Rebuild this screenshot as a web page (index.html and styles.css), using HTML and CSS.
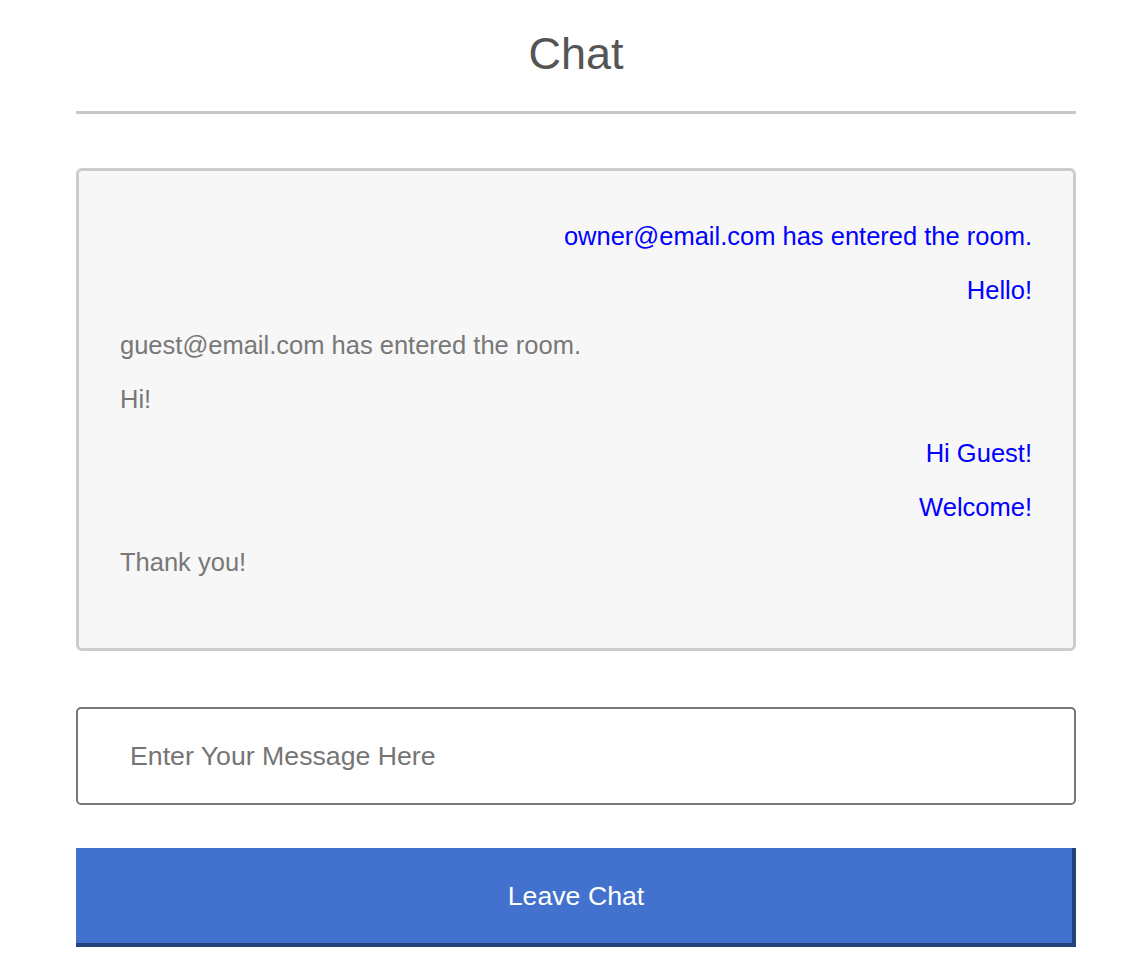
FILE: index.html
```html
<!DOCTYPE html>
<html lang="en">
<head>
<meta charset="utf-8">
<title>Chat</title>
<link rel="stylesheet" href="styles.css">
</head>
<body>
<main class="page">
  <h1 class="title">Chat</h1>
  <hr class="divider">
  <section class="messages">
    <div class="msg msg-own">owner@email.com has entered the room.</div>
    <div class="msg msg-own">Hello!</div>
    <div class="msg msg-other">guest@email.com has entered the room.</div>
    <div class="msg msg-other">Hi!</div>
    <div class="msg msg-own">Hi Guest!</div>
    <div class="msg msg-own">Welcome!</div>
    <div class="msg msg-other">Thank you!</div>
  </section>
  <input class="message-input" type="text" placeholder="Enter Your Message Here">
  <button class="leave-btn" type="button">Leave Chat</button>
</main>
</body>
</html>
```

FILE: styles.css
```css
html, body {
  margin: 0;
  padding: 0;
  background: #ffffff;
}

body {
  font-family: "Liberation Sans", Arial, Helvetica, sans-serif;
}

.page {
  width: 1000px;
  margin-left: 76px;
  display: flex;
  flex-direction: column;
}

.title {
  margin: 28px 0 0;
  font-size: 45px;
  line-height: 52px;
  font-weight: normal;
  color: #555555;
  text-align: center;
}

.divider {
  margin: 31px 0 0;
  border: none;
  height: 3px;
  background: #c8c8c8;
}

.messages {
  margin-top: 54px;
  box-sizing: content-box;
  border: 3px solid #cccccc;
  border-radius: 6px;
  background: #f7f7f7;
  padding: 38px 41px 0;
  height: 439px;
  display: flex;
  flex-direction: column;
}

.msg {
  font-size: 25.5px;
  line-height: 54.3px;
}

.msg-own {
  color: #0000ff;
  text-align: right;
}

.msg-other {
  color: #787878;
  text-align: left;
}

.message-input {
  margin-top: 56px;
  box-sizing: border-box;
  width: 100%;
  height: 98px;
  border: 2px solid #777777;
  border-radius: 5px;
  padding: 0 52px;
  font-family: "Liberation Sans", Arial, Helvetica, sans-serif;
  font-size: 26.7px;
  color: #333333;
  background: #ffffff;
  outline: none;
}

.message-input::placeholder {
  color: #757575;
}

.leave-btn {
  margin-top: 43px;
  box-sizing: border-box;
  width: 100%;
  height: 99px;
  border: none;
  border-right: 4px solid #24427a;
  border-bottom: 4px solid #24427a;
  border-radius: 0;
  background: #4272cd;
  color: #ffffff;
  font-family: "Liberation Sans", Arial, Helvetica, sans-serif;
  font-size: 26.7px;
  padding: 2px 0 0 4px;
  cursor: pointer;
}
```
